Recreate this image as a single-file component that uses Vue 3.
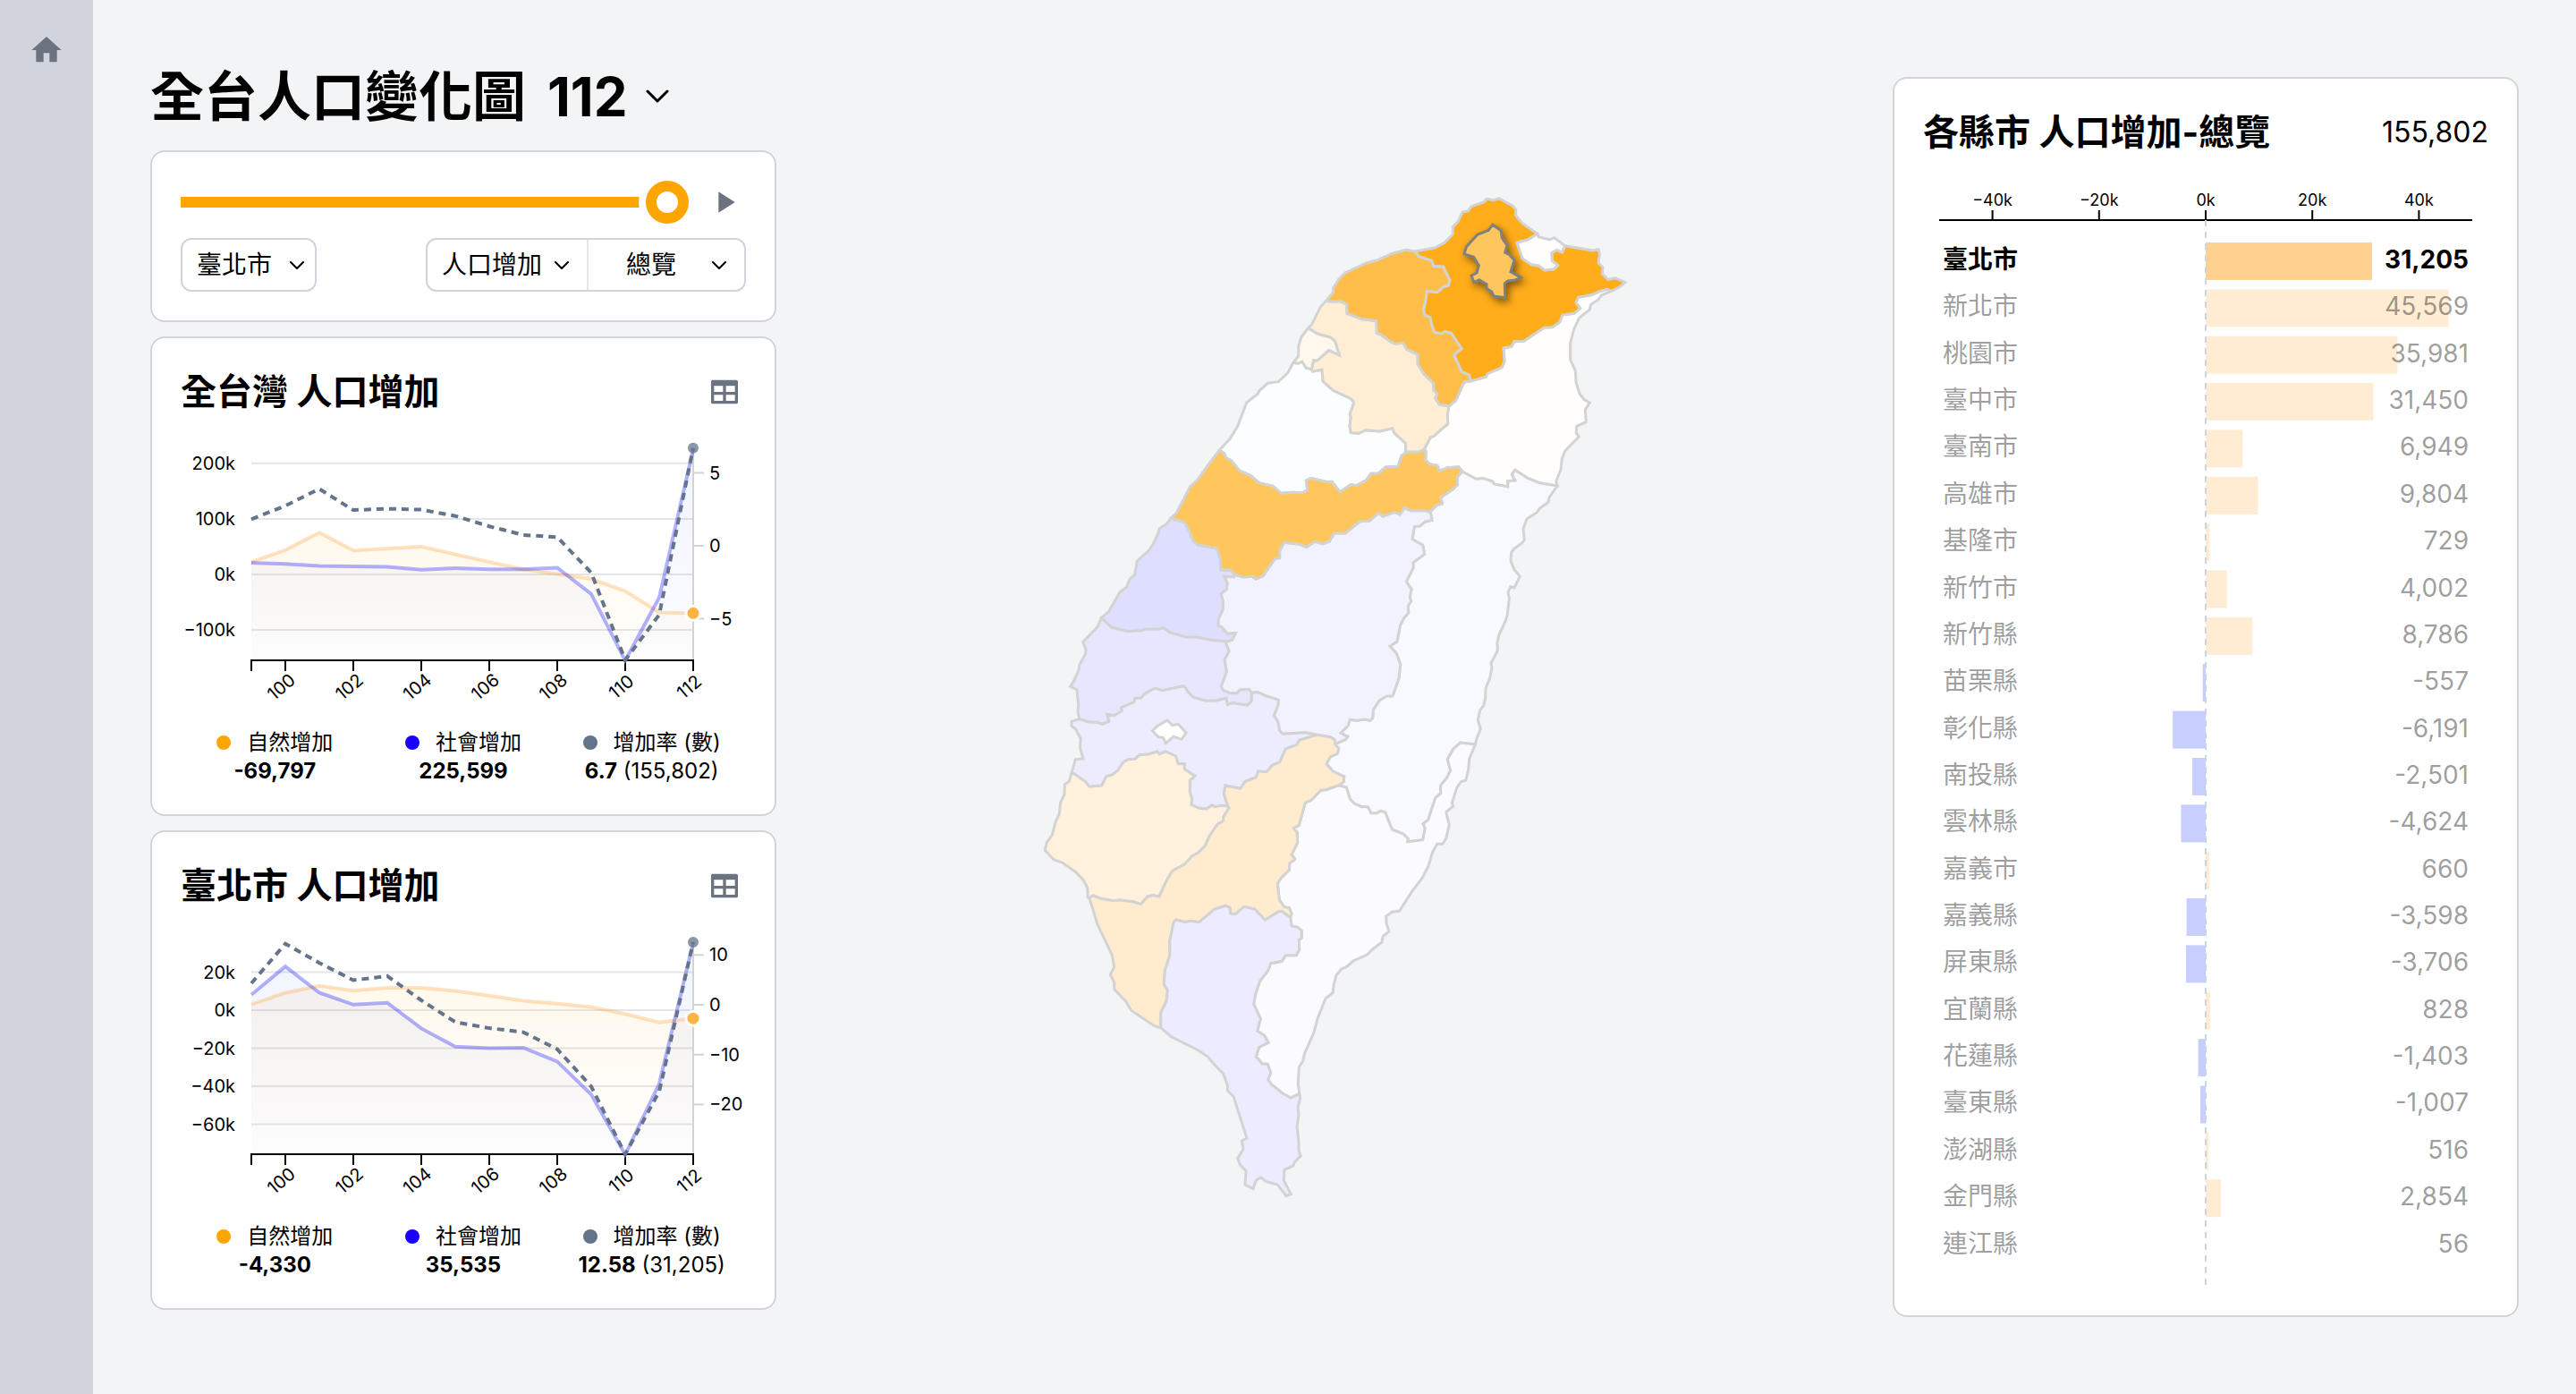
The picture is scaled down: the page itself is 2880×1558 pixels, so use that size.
<script setup>
import { computed, ref } from 'vue'

const year = ref(112)
const city = ref('臺北市')
const topic = ref('人口增加')
const kind = ref('總覽')
const years = Array.from({ length: 14 }, (_, i) => 99 + i)

const counties = [
  ['臺北市', 31205], ['新北市', 45569], ['桃園市', 35981], ['臺中市', 31450],
  ['臺南市', 6949], ['高雄市', 9804], ['基隆市', 729], ['新竹市', 4002],
  ['新竹縣', 8786], ['苗栗縣', -557], ['彰化縣', -6191], ['南投縣', -2501],
  ['雲林縣', -4624], ['嘉義市', 660], ['嘉義縣', -3598], ['屏東縣', -3706],
  ['宜蘭縣', 828], ['花蓮縣', -1403], ['臺東縣', -1007], ['澎湖縣', 516],
  ['金門縣', 2854], ['連江縣', 56],
]

const tickText = (n) => String(n).replace('-', '−')

/* ---- bar panel ---- */
const zeroX = 316
const perK = 5.96
const axisTicks = [-40, -20, 0, 20, 40].map((k) => ({ x: zeroX + k * perK, text: tickText(k) + 'k' }))
const rows = computed(() =>
  counties.map(([name, value], i) => {
    const w = (Math.abs(value) / 1000) * perK
    return {
      name,
      value: value.toLocaleString('en-US'),
      selected: name === city.value,
      negative: value < 0,
      w,
      x: value < 0 ? zeroX - w : zeroX,
      y: 95 + i * 52.36,
    }
  }),
)

/* ---- line charts ---- */
const left = 79
const right = 573
const base = 272
const xAt = (i) => left + i * 38

function buildChart(c) {
  const yK = (v) => c.zero - v * c.perK
  const yR = (v) => c.rateZero - v * c.perRate
  const line = (vals, f) => 'M' + vals.map((v, i) => `${xAt(i)},${f(v).toFixed(1)}`).join('L')
  const area = (vals) => `${line(vals, yK)}L${right},${base}L${left},${base}Z`
  return {
    ...c,
    grid: c.kTicks.map((t) => ({ y: yK(t), text: tickText(t) + 'k' })),
    rateAxis: c.rateTicks.map((t) => ({ y: yR(t), text: tickText(t) })),
    naturalLine: line(c.natural, yK),
    naturalArea: area(c.natural),
    socialLine: line(c.social, yK),
    socialArea: area(c.social),
    rateLine: line(c.rate, yR),
    naturalEnd: yK(c.natural[13]),
    rateEnd: yR(c.rate[13]),
  }
}

const charts = [
  {
    id: 'taiwan',
    place: '全台灣',
    zero: 176, perK: 0.621, kTicks: [200, 100, 0, -100],
    rateZero: 144, perRate: 16.3, rateTicks: [5, 0, -5],
    natural: [22.4, 43.7, 75.3, 43.1, 46.6, 50, 36.2, 22.4, 9.2, 0.6, -8.1, -29.9, -68.4, -69.8],
    social: [20.7, 19, 15.5, 14.4, 13.8, 8.6, 11.5, 9.2, 9.2, 12.1, -35.1, -155, -41.4, 225.6],
    rate: [1.82, 2.74, 3.9, 2.45, 2.54, 2.48, 2.04, 1.34, 0.74, 0.59, -1.84, -7.84, -4.73, 6.7],
    naturalText: '-69,797', socialText: '225,599', rateText: '6.7', totalText: '(155,802)',
  },
  {
    id: 'city',
    place: '臺北市',
    zero: 111, perK: 2.125, kTicks: [20, 0, -20, -40, -60],
    rateZero: 105, perRate: 5.57, rateTicks: [10, 0, -10, -20],
    natural: [3, 9.1, 12.8, 10.2, 11.8, 11.8, 10.1, 7.6, 4.9, 3.4, 1.7, -2, -6.4, -4.33],
    social: [8.1, 23, 9.2, 2.9, 3.9, -9.6, -19.2, -20, -19.7, -27, -44.4, -76, -38.6, 35.5],
    rate: [4.3, 12.24, 8.4, 4.94, 5.77, 0.9, -3.46, -4.68, -5.5, -8.9, -16.4, -30, -17.4, 12.58],
    naturalText: '-4,330', socialText: '35,535', rateText: '12.58', totalText: '(31,205)',
  },
].map(buildChart)

const xTicks = [100, 102, 104, 106, 108, 110, 112].map((t) => ({ x: xAt(t - 99), text: t }))

/* ---- map: borders are shared arcs, three units to the pixel from a tile origin ---- */
const tiles = {
  A: [1440, 200], B: [1280, 480], C: [1150, 700], D: [1280, 960], E: [1170, 370], F: [1460, 780],
}
const arcs = {
  newTaipeiNorth: ['A', '425,243 492,231 525,214 553,185 553,161 571,142 585,111 605,107 615,92 658,77 666,67 690,71 709,65 735,80 753,90 764,102 764,122 786,149 836,184'],
  keelungCoast: ['A', '836,184 840,194 878,204 893,197 929,224'],
  keelungLand: ['A', '929,224 919,246 902,238 884,248 886,275 905,290 892,302 861,306 841,291 817,287 786,267 768,214 804,204 836,184'],
  newTaipeiEast: ['A', '929,224 1022,240 1041,236 1045,252 1041,281 1056,296 1054,319 1073,337 1098,332 1131,347 1108,365 1086,375'],
  yilanCoast: ['A', '1086,375 1051,390 1041,405 1015,422 1012,438 977,466 959,503 947,550 947,606 964,643 966,681 978,720 993,740 1012,750 997,774 1000,815 968,829 967,852 976,864 929,912 919,938 915,974 899,1014 903,1029'],
  newTaipeiYilan: ['A', '1086,375 1068,370 1045,377 1021,388 974,397 966,414 980,434 959,451 920,456 912,479 887,497 860,498 818,526 791,544 759,545 749,562 723,567 726,612 718,632 670,652 664,664 612,678'],
  newTaipeiTaoyuan: ['A', '425,243 440,260 482,274 488,292 521,294 543,340 538,357 521,362 502,380 466,377 463,402 455,438 458,456 477,464 482,490 492,514 513,519 526,511 548,517 567,546 583,569 557,590 583,646 608,657 612,678'],
  taoyuanYilan: ['A', '612,678 591,681 562,744 540,761'],
  taoyuanCoast: ['A', '128,409 152,379 151,367 170,337 191,315 262,282 298,273 346,251 397,237 425,243'],
  taoyuanHsinchu: ['A', '128,409 145,411 178,411 197,421 198,451 248,470 296,476 298,517 311,521 343,545 360,553 386,550 398,571 436,589 435,620 455,653 488,685 489,708 501,722 494,735 508,757 540,761'],
  hsinchuCoast: ['A', '68,500 80,487 109,429 128,409'],
  hsinchuCityCoast: ['A', '18,616 35,594 35,562 45,529 68,500'],
  hsinchuCityLand: ['A', '68,500 98,519 144,532 158,545 172,591 137,574 98,609 86,608 79,638'],
  hsinchuCityMiaoli: ['A', '18,616 34,619 47,612 61,634 79,638'],
  hsinchuMiaoli: ['A', '79,638 83,645 114,640 117,678 150,708 213,738 221,751 208,788 211,800 207,829 211,851 237,853 260,842 308,846 350,836 357,852 394,886 395,915'],
  hsinchuTaichung: ['A', '395,915 441,914 456,908'],
  hsinchuYilan: ['A', '540,761 535,789 536,822 512,841 490,862 477,867 456,908'],
  yilanTaichung: ['A', '456,908 463,914 461,941 474,956 501,961 508,979 535,968 572,965 584,981'],
  yilanHualien: ['A', '584,981 630,1006 655,1004 687,1015 691,1023 737,1032 738,1013 762,1011 751,991 761,976 804,1003 843,1019 903,1029'],
  miaoliCoast: ['E', '580,399 616,361 641,319 671,240 709,211 713,201 742,175 778,170 810,139 828,106'],
  miaoliTaichung: ['B', '250,69 266,80 274,96 290,104 317,138 354,154 383,179 430,190 457,214 498,211 528,213 545,202 541,171 557,163 611,176 627,175 655,209 691,185 708,188 742,170 759,148 784,147 808,126 849,124 861,88 875,76'],
  taichungCoast: ['B', '88,297 106,280 152,191 174,172 212,119 250,69'],
  taichungChanghua: ['B', '88,297 134,312 149,342 162,375 178,387 241,399 253,433 255,471 286,470 303,487'],
  taichungNantou: ['B', '303,487 331,495 360,493 372,502 396,491 437,433 452,431 452,407 467,379 518,385 542,394 571,376 597,384 619,375 635,348 672,348 722,308 753,307 784,280 799,291 837,277 855,285 871,263 892,272 941,272 956,277'],
  taichungHualien: ['B', '956,277 981,252 997,249 993,228 1034,200 1048,186 1048,159 1064,142'],
  hualienCoast: ['B', '1383,189 1356,228 1353,244 1326,263 1314,279 1281,300 1269,333 1273,369 1266,380 1238,400 1229,412 1227,440 1239,470 1258,493 1239,530 1226,527 1218,546 1222,566 1216,620 1210,641 1187,690 1182,715 1183,741 1161,784 1164,797 1157,834 1143,868 1142,900 1136,926 1124,941 1117,974 1126,1004 1113,1036 1108,1056'],
  hualienTaitung: ['F', '568,156 518,150 494,172 475,206 485,243 473,268 452,293 452,320 434,336 410,409 393,422 400,438 392,476 341,482 343,472 326,456 289,441 266,384 252,379 236,387 218,386 208,366 187,365 162,354 148,339 136,300 110,293'],
  taitungCoast: ['F', '568,156 548,205 545,240 536,276 520,281 506,301 490,353 494,363 471,382 472,392 481,425 470,472 458,490 440,490 425,516 411,563 391,603 353,653 314,714 289,718 269,732 270,757 279,783 259,799 254,820 227,840', 'D', '745,321 699,342 676,362 659,369 642,389 634,419 630,449 606,468 580,533 566,584 536,651 530,677 517,698 514,753 518,787'],
  taitungPingtung: ['D', '518,787 490,801 462,786 425,757 413,740 422,716 411,688 394,687 373,663 383,631 414,616 400,591 377,577 388,536 365,486 371,452 386,409 413,374 422,350 460,343 472,323 508,323 518,303 517,272 526,264 526,241 513,229 492,224 488,197'],
  kaohsiungTaitung: ['D', '488,197 492,183 484,164 467,161 451,137 445,82 456,65 484,37 486,13 500,4', 'C', '893,780 882,766 902,725 900,690 889,677 907,667 928,591 948,583 981,549 998,548 1040,533'],
  kaohsiungHualien: ['C', '1040,533 1057,521 1058,504 1021,486 999,461 1012,438 1036,427 1040,409 1027,395'],
  hualienNantou: ['B', '637,1055 672,1040 680,1030 657,1018 681,994 688,973 711,976 738,972 755,976 764,967 766,940 787,908 811,894 831,893 852,834 857,788 845,753 822,727 846,711 856,658 868,633 884,615 883,591 892,577 889,562 894,535 877,510 901,462 899,447 938,418 932,388 897,368 904,326 922,324 941,309 963,304 959,284 956,277'],
  kaohsiungNantou: ['C', '1027,395 1026,380 1012,371 967,364'],
  chiayiNantou: ['C', '967,364 928,356 852,361 842,350 836,320 823,298 836,266 838,247 795,233 769,221 748,223'],
  yunlinNantou: ['C', '748,223 739,211 708,214 700,224 676,224 652,214 646,201 664,152 657,111 672,84 660,52'],
  changhuaNantou: ['B', '270,712 293,706 304,683 276,685 260,665 245,656 247,634 261,605 262,575 255,551 274,536 276,516 267,493 299,494 303,487'],
  changhuaYunlin: ['E', '184,962 219,994 271,1007 320,1004 330,1000 372,1000 394,996 411,1010 469,1027 509,1027 550,1036 598,1041'],
  changhuaCoast: ['E', '418,628 402,647 378,663 375,678 357,716 343,736 304,771 296,816 278,833 269,858 246,875 210,939 184,962'],
  yunlinCoast: ['E', '184,962 172,991 122,1043 133,1069 130,1084 111,1119 109,1135 88,1181 80,1192', 'C', '162,213 167,265 165,285 170,311'],
  yunlinChiayi: ['C', '170,311 205,322 230,322 247,328 270,319 264,295 287,299 313,284 311,273 354,254 358,241 378,241 388,227 423,208 450,215 521,200 536,222 554,239 594,250 628,250 662,241 667,262 686,257 734,265 748,250 748,223'],
  chiayiCoast: ['C', '170,311 144,319 144,334 158,345 175,377 172,405 183,444 157,446 145,490'],
  chiayiTainan: ['C', '145,490 190,520 204,538 245,534 261,503 280,498 299,484 317,456 334,446 357,445 372,431 402,429 431,420 439,428 459,420 493,435 502,461 522,461 523,479 558,502 541,517 541,554 548,580 545,598 572,610 597,613 614,600 627,605 646,601 668,603'],
  chiayiKaohsiung: ['C', '668,603 655,562 660,534 710,544 727,520 763,507 770,486 798,488 818,465 842,456 862,411 900,397 908,382 967,364'],
  tainanKaohsiung: ['C', '203,910 217,903 242,913 284,920 308,918 352,924 376,932 400,905 419,902 438,906 465,848 482,820 523,798 549,770 572,757 592,736 606,704 633,664 652,653 654,638 672,609 668,603'],
  tainanCoast: ['C', '145,490 136,520 121,530 120,564 107,591 103,628 90,657 79,700 61,725 55,751 84,782 114,793 158,824 184,851 197,876 199,909 203,910'],
  kaohsiungCoast: ['C', '203,910 216,950 231,1000 280,1102 287,1142 274,1168 287,1194 287,1216 328,1260 344,1288 422,1340 444,1346'],
  kaohsiungPingtung: ['C', '444,1346 443,1297 463,1254 466,1220 454,1201 457,1155 474,1101 473,1055 487,992 494,984 527,992 542,988 572,992 624,948 661,937 675,943 677,963 693,965 723,940 758,948 793,985 839,956 850,956 878,976'],
  pingtungCoast: ['D', '54,566 88,596 176,640 212,664 236,693 263,720 278,762 277,776 298,798 342,937 325,945 330,973 311,1004 319,1025 339,1046 336,1092 363,1106 373,1077 389,1068 407,1082 445,1092 474,1130 490,1124 466,1078 468,1042 498,1029 501,1018 523,995 516,980 516,945 510,897 516,858 513,835 521,801 518,787'],
  taipei: ['A', '686,153 714,173 718,198 735,223 728,247 741,253 759,272 747,311 781,331 758,340 737,342 727,350 728,398 690,393 683,378 666,367 666,353 641,338 624,347 615,324 633,315 640,290 623,262 591,252 598,228 635,187 673,172'],
  chiayiCity: ['C', '466,315 482,332 502,328 528,357 513,379 486,370 460,392 451,373 436,371 415,350 433,334'],
}
const regions = [
  ['苗栗縣', '#fcfdff', 'miaoliCoast hsinchuCityMiaoli hsinchuMiaoli -miaoliTaichung'],
  ['宜蘭縣', '#fffefd', 'yilanCoast -yilanHualien -yilanTaichung -hsinchuYilan -taoyuanYilan -newTaipeiYilan'],
  ['花蓮縣', '#f8f9ff', 'hualienCoast hualienTaitung kaohsiungHualien hualienNantou taichungHualien yilanHualien'],
  ['臺東縣', '#fbfbff', 'taitungCoast taitungPingtung kaohsiungTaitung -hualienTaitung'],
  ['南投縣', '#f2f2ff', 'taichungNantou -hualienNantou kaohsiungNantou chiayiNantou yunlinNantou changhuaNantou'],
  ['彰化縣', '#dedfff', 'changhuaCoast changhuaYunlin changhuaNantou -taichungChanghua'],
  ['雲林縣', '#e6e6ff', 'yunlinCoast yunlinChiayi yunlinNantou -changhuaYunlin'],
  ['嘉義縣', '#edecff', 'chiayiCoast chiayiTainan chiayiKaohsiung chiayiNantou -yunlinChiayi'],
  ['嘉義市', '#fffefc', 'chiayiCity'],
  ['臺南市', '#fff1dc', 'tainanCoast tainanKaohsiung -chiayiTainan'],
  ['高雄市', '#ffecce', 'kaohsiungCoast kaohsiungPingtung kaohsiungTaitung kaohsiungHualien kaohsiungNantou -chiayiKaohsiung -tainanKaohsiung'],
  ['屏東縣', '#ecebff', 'pingtungCoast taitungPingtung -kaohsiungPingtung'],
  ['臺中市', '#ffc65e', 'taichungCoast miaoliTaichung hsinchuTaichung yilanTaichung -taichungHualien -taichungNantou -taichungChanghua'],
  ['新竹縣', '#ffeed3', 'hsinchuCoast taoyuanHsinchu hsinchuYilan -hsinchuTaichung -hsinchuMiaoli -hsinchuCityLand'],
  ['新竹市', '#fff8ec', 'hsinchuCityCoast hsinchuCityLand -hsinchuCityMiaoli'],
  ['桃園市', '#ffbe49', 'taoyuanCoast newTaipeiTaoyuan taoyuanYilan -taoyuanHsinchu'],
  ['新北市', '#ffad1a', 'newTaipeiNorth -keelungLand newTaipeiEast newTaipeiYilan -newTaipeiTaoyuan'],
  ['基隆市', '#fffefc', 'keelungCoast keelungLand'],
  ['臺北市', '#ffc65e', 'taipei'],
]

function arcPoints(name) {
  const parts = arcs[name]
  const out = []
  for (let i = 0; i < parts.length; i += 2) {
    const [ox, oy] = tiles[parts[i]]
    for (const pair of parts[i + 1].split(' ')) {
      const [x, y] = pair.split(',').map(Number)
      out.push(`${(ox + x / 3).toFixed(1)},${(oy + y / 3).toFixed(1)}`)
    }
  }
  return out
}
const shapes = regions.map(([name, fill, ring]) => ({
  name,
  fill,
  points: ring
    .split(' ')
    .flatMap((a) => (a[0] === '-' ? arcPoints(a.slice(1)).reverse() : arcPoints(a)))
    .join(' '),
}))
</script>

<template>
  <div class="app">
    <nav class="rail">
      <a href="#" aria-label="首頁">
        <svg class="icon" viewBox="0 0 24 24"><path d="M10 20v-6h4v6h5v-8h3L12 3 2 12h3v8z" /></svg>
      </a>
    </nav>

    <main class="page">
      <section class="column">
        <header class="heading">
          <h1>全台人口變化圖</h1>
          <div class="picker year">
            <select v-model="year" aria-label="年度">
              <option v-for="y in years" :key="y" :value="y">{{ y }}</option>
            </select>
            <svg class="chevron" viewBox="0 0 26 16"><path d="M2 2l11 11L24 2" /></svg>
          </div>
        </header>

        <div class="card controls">
          <div class="timeline">
            <input v-model.number="year" type="range" min="99" max="112" aria-label="年度時間軸" />
            <button type="button" aria-label="播放">
              <svg class="icon" viewBox="0 0 24 24"><path d="M8 5v14l11-7z" /></svg>
            </button>
          </div>
          <div class="filters">
            <div class="picker boxed city">
              <select v-model="city" aria-label="縣市">
                <option v-for="c in counties" :key="c[0]">{{ c[0] }}</option>
              </select>
              <svg class="chevron" viewBox="0 0 16 10"><path d="M1 1l7 7 7-7" /></svg>
            </div>
            <div class="boxed group">
              <div class="picker topic">
                <select v-model="topic" aria-label="主題">
                  <option>人口增加</option>
                </select>
                <svg class="chevron" viewBox="0 0 16 10"><path d="M1 1l7 7 7-7" /></svg>
              </div>
              <div class="picker kind">
                <select v-model="kind" aria-label="類別">
                  <option>總覽</option>
                </select>
                <svg class="chevron" viewBox="0 0 16 10"><path d="M1 1l7 7 7-7" /></svg>
              </div>
            </div>
          </div>
        </div>

        <article v-for="c in charts" :key="c.id" class="card">
          <header class="card-head">
            <h2>{{ c.place }} 人口增加</h2>
            <button type="button" aria-label="顯示表格">
              <svg class="icon" viewBox="0 0 24 24">
                <path fill-rule="evenodd" d="M4 4h16q1 0 1 1v14q0 1-1 1H4q-1 0-1-1V5q0-1 1-1zM5 8v4h6V8zM13 8v4h6V8zM5 14v4h6v-4zM13 14v4h6v-4z" />
              </svg>
            </button>
          </header>

          <svg class="chart" viewBox="0 0 632 332" role="img" :aria-label="c.place + ' 人口增加'">
            <defs>
              <linearGradient :id="c.id + '-natural'" x1="0" y1="0" x2="0" y2="1">
                <stop offset="0" stop-color="orange" stop-opacity="0.07" />
                <stop offset="1" stop-color="orange" stop-opacity="0.01" />
              </linearGradient>
              <linearGradient :id="c.id + '-social'" x1="0" y1="0" x2="0" y2="1">
                <stop offset="0" stop-color="#3050ff" stop-opacity="0.07" />
                <stop offset="1" stop-color="#3050ff" stop-opacity="0.01" />
              </linearGradient>
            </defs>
            <g v-for="g in c.grid" :key="g.text">
              <line class="grid" x1="79" x2="573" :y1="g.y" :y2="g.y" />
              <text class="tick end" x="61" :y="g.y + 7">{{ g.text }}</text>
            </g>
            <path :d="c.naturalArea" :fill="`url(#${c.id}-natural)`" />
            <path :d="c.socialArea" :fill="`url(#${c.id}-social)`" />
            <g v-for="r in c.rateAxis" :key="r.text">
              <line class="rate-tick" x1="573" x2="585" :y1="r.y" :y2="r.y" />
              <text class="tick" x="591" :y="r.y + 7">{{ r.text }}</text>
            </g>
            <line class="cursor" x1="573" x2="573" :y1="c.rateEnd" y2="272" />
            <path class="axis" d="M79 284V272H573V284" />
            <g v-for="t in xTicks" :key="t.text">
              <line class="axis" :x1="t.x" :x2="t.x" y1="272" y2="284" />
              <text class="tick middle" :transform="`translate(${t.x} 307) rotate(-40)`">{{ t.text }}</text>
            </g>
            <path class="natural" :d="c.naturalLine" />
            <path class="social" :d="c.socialLine" />
            <path class="rate" :d="c.rateLine" />
            <circle class="natural-dot" cx="573" :cy="c.naturalEnd" r="8" />
            <circle class="rate-dot" cx="573" :cy="c.rateEnd" r="6" />
          </svg>

          <dl class="legend">
            <div>
              <dt><i class="orange"></i>自然增加</dt>
              <dd><b>{{ c.naturalText }}</b></dd>
            </div>
            <div>
              <dt><i class="blue"></i>社會增加</dt>
              <dd><b>{{ c.socialText }}</b></dd>
            </div>
            <div>
              <dt><i class="slate"></i>增加率 (數)</dt>
              <dd><b>{{ c.rateText }}</b> {{ c.totalText }}</dd>
            </div>
          </dl>
        </article>
      </section>

      <svg class="map" viewBox="868 86 1248 1386" role="img" aria-label="臺灣各縣市地圖">
        <polygon
          v-for="s in shapes"
          :key="s.name"
          :points="s.points"
          :fill="s.fill"
          :class="{ active: s.name === city }"
        />
      </svg>

      <aside class="card panel">
        <header class="card-head">
          <h2>各縣市 人口增加-總覽</h2>
          <output>155,802</output>
        </header>
        <svg class="chart" viewBox="0 0 632 1262" role="img" aria-label="各縣市人口增加">
          <path class="axis" d="M18 70H614" />
          <g v-for="t in axisTicks" :key="t.text">
            <line class="axis" :x1="t.x" :x2="t.x" y1="59" y2="70" />
            <text class="tick small middle" :x="t.x" y="54">{{ t.text }}</text>
          </g>
          <g v-for="r in rows" :key="r.name" class="row" :class="{ selected: r.selected }">
            <rect :class="{ negative: r.negative }" :x="r.x" :y="r.y" :width="r.w" height="42" />
            <text x="22" :y="r.y + 29">{{ r.name }}</text>
            <text class="end" x="610" :y="r.y + 29">{{ r.value }}</text>
          </g>
          <line class="zero" x1="316" x2="316" y1="70" y2="1262" />
        </svg>
      </aside>
    </main>
  </div>
</template>

<style>
body {
  margin: 0;
}
</style>

<style scoped>
.app {
  display: flex;
  min-height: 100vh;
  background: #f3f4f6;
  color: #000;
  font-family: Inter, 'Noto Sans CJK TC', sans-serif;
}
.app * {
  box-sizing: border-box;
}
.rail {
  flex: 0 0 104px;
  padding: 36px 32px;
  background: #d1d5db;
}
.icon {
  display: block;
  width: 40px;
  height: 40px;
  fill: #6b7280;
}
.page {
  flex: 1;
  display: grid;
  grid-template-columns: 700px minmax(0, 1fr) 700px;
  padding: 64px;
}
.column {
  display: flex;
  flex-direction: column;
  gap: 16px;
}
.heading {
  display: flex;
  align-items: center;
  gap: 24px;
  height: 88px;
}
h1,
h2 {
  margin: 0;
  font-weight: 700;
}
h1 {
  font-size: 60px;
  line-height: 88px;
}
h2 {
  font-size: 40px;
  line-height: 56px;
}
select {
  appearance: none;
  width: 100%;
  height: 100%;
  margin: 0;
  padding: 0;
  border: 0;
  background: none;
  color: inherit;
  font: inherit;
}
button {
  padding: 0;
  border: 0;
  background: none;
}
.picker {
  position: relative;
  font-size: 28px;
  line-height: 40px;
}
.chevron {
  position: absolute;
  top: 50%;
  right: 12px;
  width: 16px;
  height: 10px;
  margin-top: -4px;
  fill: none;
  stroke: #000;
  stroke-width: 2;
  stroke-linecap: round;
  stroke-linejoin: round;
  pointer-events: none;
}
.year {
  width: 136px;
  height: 88px;
  font-size: 60px;
  font-weight: 700;
  line-height: 88px;
}
.year .chevron {
  right: 0;
  width: 26px;
  height: 16px;
  margin-top: -8px;
  stroke-width: 3;
}
.card {
  padding: 32px;
  border: 2px solid #d1d5db;
  border-radius: 16px;
  background: #fff;
}
.controls {
  display: flex;
  flex-direction: column;
  gap: 16px;
}
.timeline {
  display: flex;
  align-items: center;
  height: 48px;
  padding-right: 4px;
  gap: 20px;
}
input[type='range'] {
  appearance: none;
  flex: 1;
  min-width: 0;
  height: 48px;
  margin: 0;
  background: linear-gradient(orange, orange) center / 100% 12px no-repeat;
}
input[type='range']::-webkit-slider-thumb {
  appearance: none;
  width: 48px;
  height: 48px;
  border: 12px solid orange;
  border-radius: 50%;
  background: #fff;
  box-shadow: 0 0 0 8px #fff;
}
.filters {
  display: flex;
  justify-content: space-between;
}
.boxed {
  height: 60px;
  border: 2px solid #d1d5db;
  border-radius: 12px;
}
.group {
  display: flex;
}
.city {
  width: 152px;
}
.city select,
.topic select {
  padding-left: 16px;
}
.topic {
  width: 178px;
}
.topic .chevron,
.kind .chevron {
  right: 20px;
}
.kind {
  width: 176px;
  border-left: 2px solid #e5e7eb;
}
.kind select {
  padding-left: 42px;
}
.card-head {
  display: flex;
  align-items: center;
  justify-content: space-between;
}
.card-head button {
  margin-right: 4px;
}
.card-head output {
  font-size: 32px;
  line-height: 56px;
}
.chart {
  display: block;
  width: 100%;
}
.tick {
  font-size: 20px;
}
.small {
  font-size: 18px;
}
.end {
  text-anchor: end;
}
.middle {
  text-anchor: middle;
}
.grid {
  stroke: #000;
  stroke-opacity: 0.1;
  stroke-width: 2;
}
.rate-tick,
.cursor {
  stroke: #d3d3d3;
  stroke-width: 2;
}
.axis {
  fill: none;
  stroke: #000;
  stroke-width: 2;
}
.natural,
.social,
.rate {
  fill: none;
  stroke-width: 4;
}
.natural {
  stroke: #ffa032;
  stroke-opacity: 0.3;
}
.social {
  stroke: blue;
  stroke-opacity: 0.3;
}
.rate {
  stroke: #64748b;
  stroke-width: 4;
  stroke-dasharray: 8 6;
}
.natural-dot {
  fill: #ffb347;
  stroke: #fff;
  stroke-width: 3;
}
.rate-dot {
  fill: #64748b;
  fill-opacity: 0.75;
}
.legend {
  display: grid;
  grid-template-columns: repeat(3, 1fr);
  margin: 16px 0 0;
  font-size: 24px;
  line-height: 32px;
  text-align: center;
}
.legend dt {
  display: flex;
  align-items: center;
  justify-content: center;
}
.legend dd {
  margin: 0;
}
.legend i {
  width: 16px;
  height: 16px;
  margin-right: 18px;
  border-radius: 50%;
}
.orange {
  background: orange;
}
.blue {
  background: #1a00ff;
}
.slate {
  background: #64748b;
}
.map {
  align-self: center;
  width: 100%;
}
.map polygon {
  stroke: #d3d3d3;
  stroke-width: 3;
}
.map .active {
  stroke: gray;
  filter: drop-shadow(3px 4px 4px rgba(0, 0, 0, 0.5));
}
.panel {
  align-self: center;
}
.row {
  font-size: 28px;
}
.row rect {
  fill: #ffecd3;
}
.row .negative {
  fill: #c8ceff;
}
.row text {
  fill-opacity: 0.4;
}
.selected {
  font-weight: 700;
}
.selected rect {
  fill: #ffd191;
}
.selected text {
  fill-opacity: 1;
}
.zero {
  stroke: #cbd5e1;
  stroke-width: 2;
  stroke-dasharray: 7 6;
}
</style>
